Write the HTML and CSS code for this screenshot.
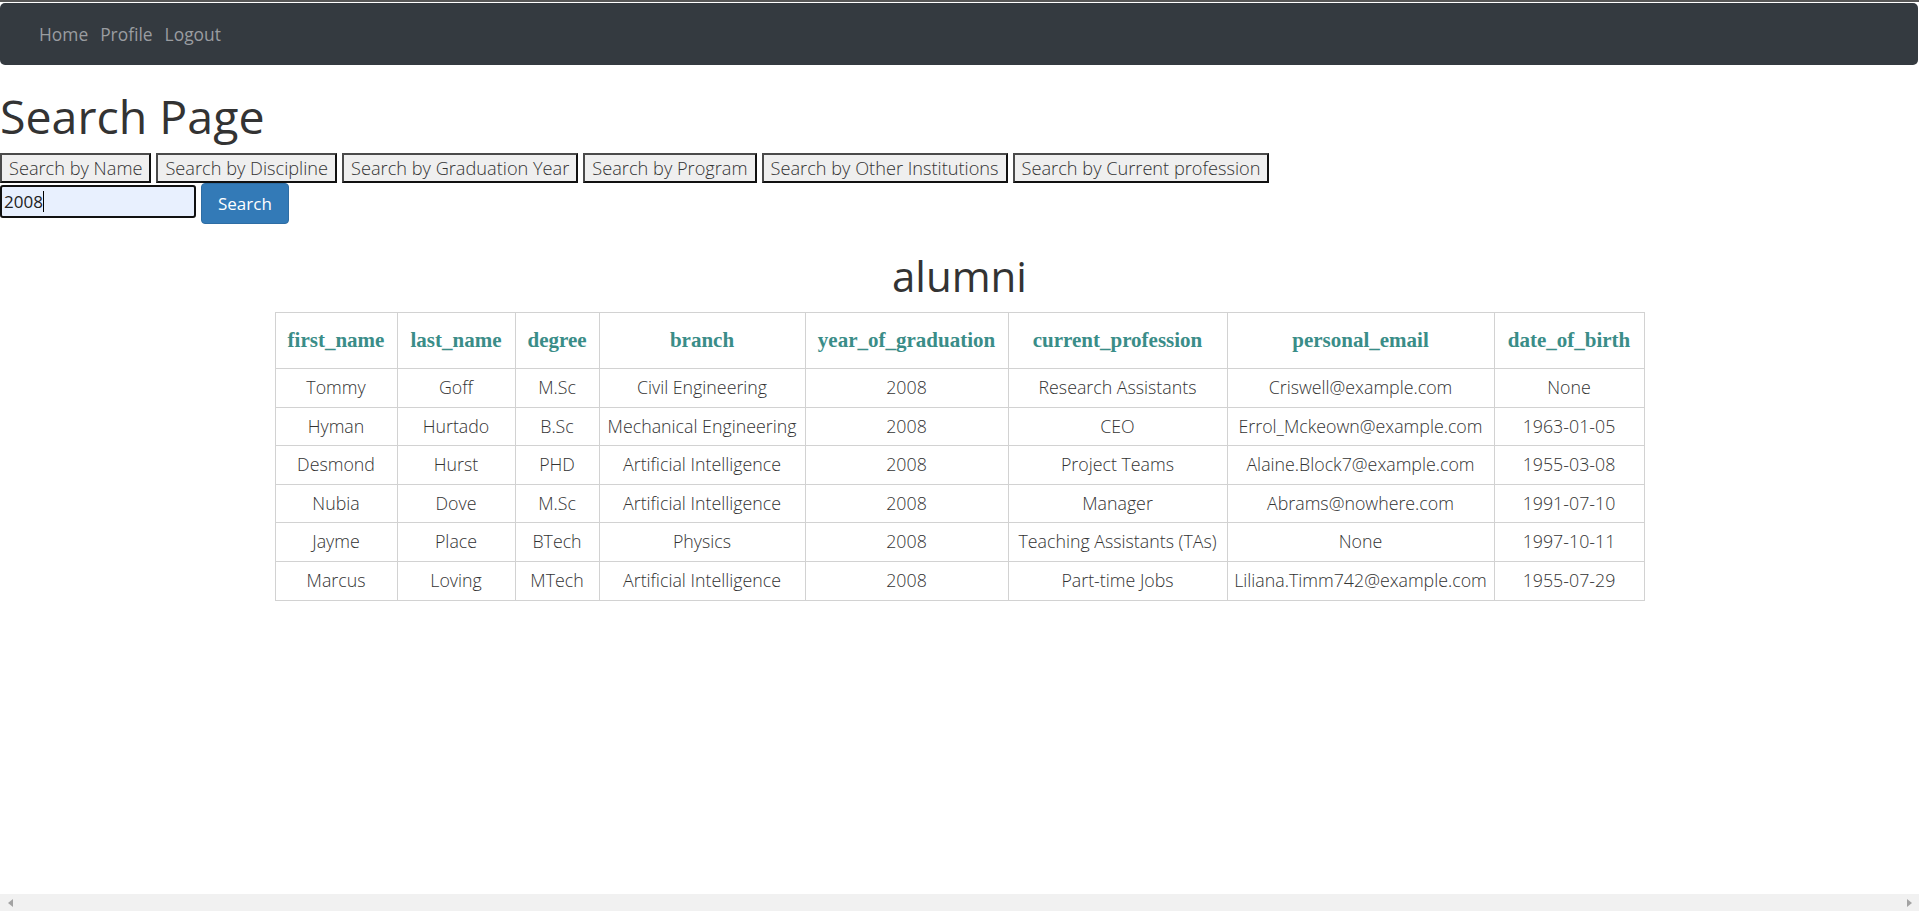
FILE: index.html
```html
<!DOCTYPE html>
<html lang="en">
<head>
<meta charset="utf-8">
<title>Search Page</title>
<link rel="stylesheet" href="styles.css">
</head>
<body>
<div class="topline"></div>
<nav class="navbar">
  <a class="nav-link" href="#">Home</a>
  <a class="nav-link" href="#">Profile</a>
  <a class="nav-link" href="#">Logout</a>
</nav>

<h1 class="page-title">Search Page</h1>

<div class="filter-row">
  <button class="filter-btn">Search by Name</button>
  <button class="filter-btn">Search by Discipline</button>
  <button class="filter-btn">Search by Graduation Year</button>
  <button class="filter-btn">Search by Program</button>
  <button class="filter-btn">Search by Other Institutions</button>
  <button class="filter-btn">Search by Current profession</button>
</div>

<form class="search-row">
  <div class="search-input"><span class="typed">2008</span><span class="caret"></span></div>
  <button class="search-btn" type="button">Search</button>
</form>

<h2 class="table-title">alumni</h2>

<table class="alumni">
  <colgroup>
    <col class="c1"><col class="c2"><col class="c3"><col class="c4">
    <col class="c5"><col class="c6"><col class="c7"><col class="c8">
  </colgroup>
  <thead>
    <tr>
      <th>first_name</th><th>last_name</th><th>degree</th><th>branch</th>
      <th>year_of_graduation</th><th>current_profession</th><th>personal_email</th><th>date_of_birth</th>
    </tr>
  </thead>
  <tbody>
    <tr><td>Tommy</td><td>Goff</td><td>M.Sc</td><td>Civil Engineering</td><td>2008</td><td>Research Assistants</td><td>Criswell@example.com</td><td>None</td></tr>
    <tr><td>Hyman</td><td>Hurtado</td><td>B.Sc</td><td>Mechanical Engineering</td><td>2008</td><td>CEO</td><td>Errol_Mckeown@example.com</td><td>1963-01-05</td></tr>
    <tr><td>Desmond</td><td>Hurst</td><td>PHD</td><td>Artificial Intelligence</td><td>2008</td><td>Project Teams</td><td>Alaine.Block7@example.com</td><td>1955-03-08</td></tr>
    <tr><td>Nubia</td><td>Dove</td><td>M.Sc</td><td>Artificial Intelligence</td><td>2008</td><td>Manager</td><td>Abrams@nowhere.com</td><td>1991-07-10</td></tr>
    <tr><td>Jayme</td><td>Place</td><td>BTech</td><td>Physics</td><td>2008</td><td>Teaching Assistants (TAs)</td><td>None</td><td>1997-10-11</td></tr>
    <tr><td>Marcus</td><td>Loving</td><td>MTech</td><td>Artificial Intelligence</td><td>2008</td><td>Part-time Jobs</td><td>Liliana.Timm742@example.com</td><td>1955-07-29</td></tr>
  </tbody>
</table>

<div class="hscroll">
  <span class="arrow-left"></span>
  <span class="arrow-right"></span>
</div>
</body>
</html>
```

FILE: styles.css
```css
html {
  overflow: hidden;
}

body {
  margin: 0;
  font-family: "Open Sans", "Noto Sans", sans-serif;
  font-size: 17px;
  color: #333;
  background: #fff;
}

.topline {
  height: 2px;
  background: #575757;
  margin-bottom: 1px;
}

.navbar {
  height: 62px;
  width: 1918px;
  background: #343a40;
  border-radius: 5px;
  display: flex;
  align-items: center;
  padding-left: 33px;
  box-sizing: border-box;
}

.nav-link {
  color: #9a9da1;
  text-decoration: none;
  font-size: 17.4px;
  padding: 0 6px;
}

.page-title {
  font-size: 46.5px;
  font-weight: 400;
  line-height: 50px;
  margin: 26px 0 12px 0;
  color: #333;
}

.filter-row {
  display: flex;
  gap: 5px;
  align-items: flex-start;
}

.filter-btn {
  font-family: "Open Sans", "Noto Sans", sans-serif;
  font-size: 18.2px;
  font-weight: 300;
  line-height: 24px;
  color: #333;
  background: #efefef;
  padding: 1px 7px;
  border-width: 2px;
  border-style: solid;
  border-color: #4a4a4a #111 #111 #4a4a4a;
  border-radius: 0;
  height: 30px;
  box-sizing: border-box;
  display: flex;
  align-items: center;
}

.search-row {
  display: flex;
  gap: 5px;
  align-items: flex-start;
  margin: 0;
}

.search-input {
  width: 196px;
  height: 33px;
  margin-top: 2px;
  box-sizing: border-box;
  border: 2px solid #111;
  border-radius: 3px;
  background: #e8f0fe;
  display: flex;
  align-items: center;
  padding-left: 2px;
  font-size: 17px;
  color: #222;
}

.caret {
  display: inline-block;
  width: 1px;
  height: 21px;
  background: #000;
}

.search-btn {
  font-family: "Open Sans", "Noto Sans", sans-serif;
  font-size: 17px;
  line-height: 23px;
  color: #fff;
  background: #337ab7;
  border: 1px solid #2e6da4;
  border-radius: 4px;
  padding: 8px 16px;
  height: 41px;
  box-sizing: border-box;
}

.table-title {
  text-align: center;
  font-size: 42px;
  font-weight: 400;
  line-height: 46px;
  margin: 29px 0 13px 0;
  color: #333;
}

.alumni {
  margin: 0 auto;
  border-collapse: collapse;
  table-layout: fixed;
  width: 1369px;
}

.c1 { width: 122px; }
.c2 { width: 118px; }
.c3 { width: 84px; }
.c4 { width: 206px; }
.c5 { width: 203px; }
.c6 { width: 219px; }
.c7 { width: 267px; }
.c8 { width: 150px; }

.alumni th,
.alumni td {
  border: 1px solid #d2d2d2;
  text-align: center;
  white-space: nowrap;
  overflow: visible;
}

.alumni th {
  font-family: "Liberation Serif", "Times New Roman", serif;
  font-weight: 700;
  font-size: 21px;
  color: #3a8d88;
  padding: 12px 4px;
  line-height: 31px;
}

.alumni td {
  font-size: 17.8px;
  font-weight: 300;
  color: #333;
  padding: 8px 2px;
  line-height: 21.6px;
}

.hscroll {
  position: fixed;
  left: 0;
  right: 0;
  bottom: 0;
  height: 17px;
  background: #f1f1f1;
}

.arrow-left,
.arrow-right {
  position: absolute;
  top: 5px;
  width: 0;
  height: 0;
  border-top: 4px solid transparent;
  border-bottom: 4px solid transparent;
}

.arrow-left {
  left: 8px;
  border-right: 5px solid #a3a3a3;
}

.arrow-right {
  right: 7px;
  border-left: 5px solid #a3a3a3;
}
```
